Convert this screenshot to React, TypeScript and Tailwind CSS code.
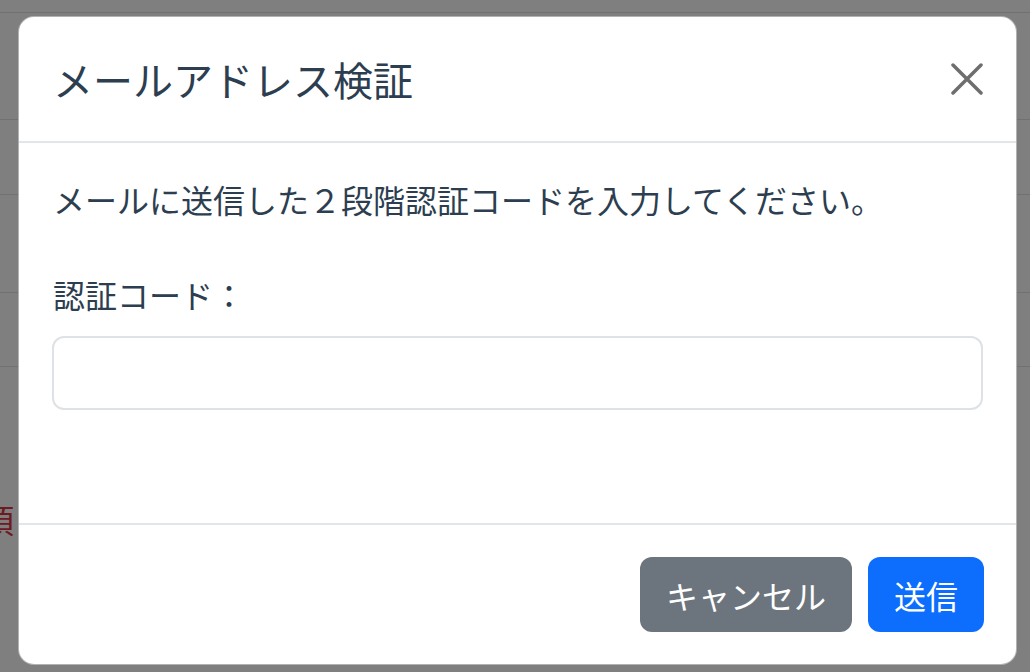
export default function App() {
  const font = { fontFamily: '"Noto Sans CJK JP", "Noto Sans", sans-serif' };
  const rows = [13, 107, 75, 98, 74];

  return (
    <div className="relative h-[672px] w-[1030px] overflow-hidden bg-white" style={font}>
      {/* page behind the modal */}
      <div className="flex flex-col">
        {rows.map((h, i) => (
          <div key={i} style={{ height: h }} className="border-b border-[#dee2e6]" />
        ))}
        <div className="mt-[128px] -ml-[18px] text-[32px] leading-[48px] text-[#dc3545]">項目</div>
      </div>

      {/* backdrop */}
      <div className="absolute inset-0 bg-black/50">
        <div className="ml-[18px] mt-[16px] w-[999px] overflow-hidden rounded-[16px] border border-black/30 bg-white text-[#2c3e50]">
          <div className="flex h-[126px] items-center justify-between border-b-2 border-[#e3e6e9] pl-[34px] pr-[31px]">
            <h1 className="text-[40px] leading-[60px] font-normal">メールアドレス検証</h1>
            <button className="flex h-[36px] w-[36px] items-center justify-center">
              <svg width="32" height="32" viewBox="0 0 32 32">
                <path d="M2 2 L30 30 M30 2 L2 30" stroke="#6e6e6e" strokeWidth="3.5" strokeLinecap="round" />
              </svg>
            </button>
          </div>

          <div className="px-[33px] pt-[32px] pb-[113px]">
            <p className="pl-[1px] text-[32px] leading-[48px]">メールに送信した２段階認証コードを入力してください。</p>
            <label className="mt-[47px] block pl-[1px] text-[32px] leading-[48px]">認証コード：</label>
            <input
              type="text"
              className="mt-[18px] block h-[74px] w-full rounded-[12px] border-2 border-[#dee2e6] bg-white px-[24px] text-[32px] outline-none"
            />
          </div>

          <div className="flex justify-end gap-[16px] border-t-2 border-[#e3e6e9] px-[32px] py-[32px]">
            <button className="h-[75px] w-[212px] rounded-[12px] bg-[#6c757d] text-[32px] leading-[48px] text-white">
              キャンセル
            </button>
            <button className="h-[75px] w-[116px] rounded-[12px] bg-[#0d6efd] text-[32px] leading-[48px] text-white">
              送信
            </button>
          </div>
        </div>
      </div>
    </div>
  );
}
